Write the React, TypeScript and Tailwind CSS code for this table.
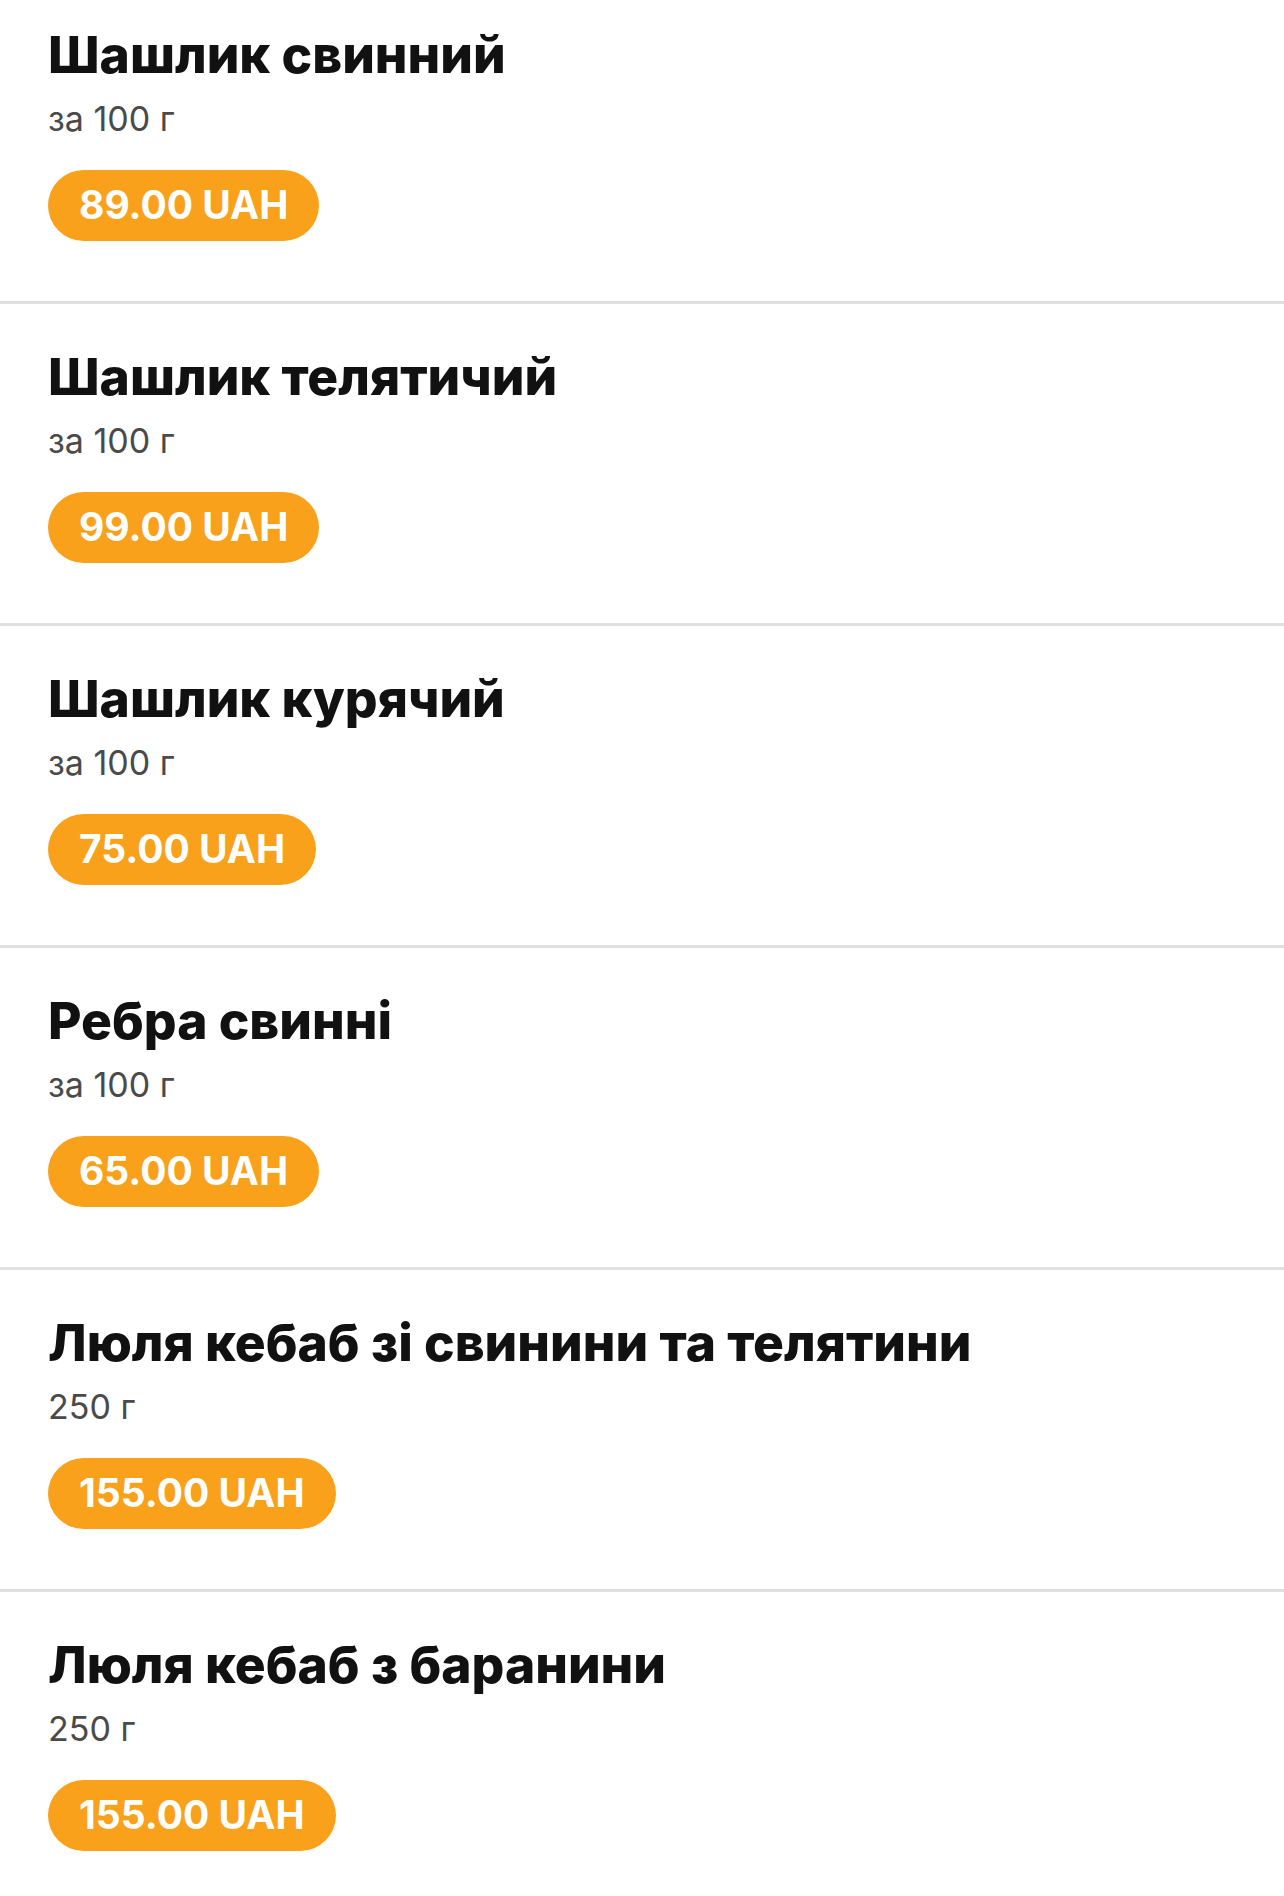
const items = [
  { name: "Шашлик свинний", weight: "за 100 г", price: "89.00 UAH" },
  { name: "Шашлик телятичий", weight: "за 100 г", price: "99.00 UAH" },
  { name: "Шашлик курячий", weight: "за 100 г", price: "75.00 UAH" },
  { name: "Ребра свинні", weight: "за 100 г", price: "65.00 UAH" },
  { name: "Люля кебаб зі свинини та телятини", weight: "250 г", price: "155.00 UAH" },
  { name: "Люля кебаб з баранини", weight: "250 г", price: "155.00 UAH" },
];

export default function App() {
  return (
    <div className="min-h-[1896px] w-[1284px] overflow-hidden bg-white font-['Inter',sans-serif]">
      <div className="-mt-[18px]">
        {items.map((item, i) => (
          <div key={i} className="border-b-[3px] border-[#e0e0e0] px-[48px] pt-[43px] pb-[60px]">
            <h3 className="text-[51.5px] leading-[58px] font-extrabold text-[#111]">{item.name}</h3>
            <p className="mt-[15px] text-[34px] leading-[42px] text-[#4a4a4a]">{item.weight}</p>
            <div className="mt-[30px] inline-flex h-[71px] items-center rounded-full bg-[#f9a11b] px-[31px] text-[39px] font-bold text-white">
              {item.price}
            </div>
          </div>
        ))}
      </div>
    </div>
  );
}
